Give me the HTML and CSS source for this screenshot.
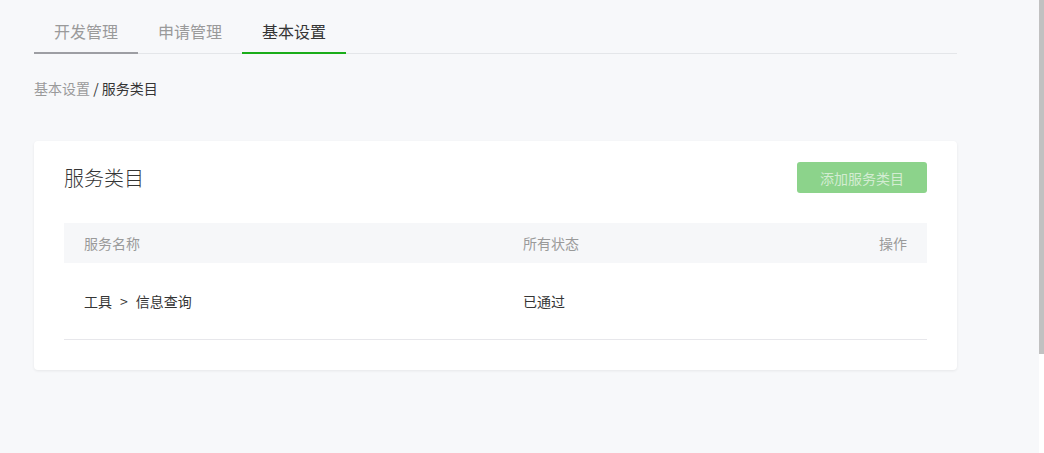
FILE: index.html
```html
<!DOCTYPE html>
<html lang="zh-CN">
<head>
<meta charset="utf-8">
<title>服务类目</title>
<link rel="stylesheet" href="styles.css">
</head>
<body>
<div class="page">
  <nav class="tabs">
    <a class="tab tab-visited">开发管理</a>
    <a class="tab">申请管理</a>
    <a class="tab tab-active">基本设置</a>
  </nav>
  <div class="breadcrumb"><span class="crumb-link">基本设置</span> / <span class="crumb-current">服务类目</span></div>
  <section class="card">
    <div class="card-head">
      <h2 class="card-title">服务类目</h2>
      <button class="btn-add" disabled>添加服务类目</button>
    </div>
    <div class="table">
      <div class="thead">
        <div class="col-name">服务名称</div>
        <div class="col-status">所有状态</div>
        <div class="col-op">操作</div>
      </div>
      <div class="trow">
        <div class="col-name">工具<span class="sep">&gt;</span>信息查询</div>
        <div class="col-status">已通过</div>
        <div class="col-op"></div>
      </div>
    </div>
  </section>
</div>
<div class="scrollbar"><div class="scroll-thumb"></div></div>
</body>
</html>
```
FILE: styles.css
```css
* { box-sizing: border-box; }
html, body { margin: 0; padding: 0; }
body {
  background: #f7f8fa;
  font-family: "Noto Sans CJK SC", "Noto Sans", sans-serif;
  color: #353535;
  font-size: 14px;
  height: 453px;
  overflow: hidden;
}
.page {
  width: 923px;
  margin-left: 34px;
}
.tabs {
  display: flex;
  border-bottom: 1px solid #e4e6e9;
  height: 54px;
}
.tab {
  width: 104px;
  text-align: center;
  font-size: 16px;
  line-height: 22px;
  padding-top: 20px;
  height: 54px;
  border-bottom: 2px solid transparent;
  margin-bottom: -1px;
  color: #9a9a9a;
}
.tab-visited { border-bottom-color: #9d9ea3; }
.tab-active { border-bottom-color: #1aad19; color: #353535; }
.breadcrumb {
  margin-top: 24px;
  line-height: 20px;
  font-size: 14px;
  color: #353535;
}
.crumb-link { color: #9a9a9a; }
.card {
  margin-top: 43px;
  background: #fff;
  border-radius: 4px;
  box-shadow: 0 1px 3px rgba(0,0,0,0.07);
  padding: 21px 30px 30px;
}
.card-head {
  display: flex;
  justify-content: space-between;
  align-items: center;
  height: 31px;
}
.card-title {
  margin: 0;
  font-size: 20px;
  font-weight: 300;
  line-height: 28px;
  color: #353535;
}
.btn-add {
  width: 130px;
  height: 31px;
  border: 0;
  border-radius: 3px;
  background: #8cd38b;
  color: #d3ecd2;
  font-family: inherit;
  font-size: 14px;
  padding: 0;
}
.table { margin-top: 30px; }
.thead, .trow {
  display: grid;
  grid-template-columns: 439px 1fr 120px;
  align-items: center;
  padding: 0 20px;
}
.thead {
  height: 40px;
  background: #f6f7f9;
  color: #9a9a9a;
}
.trow {
  height: 77px;
  border-bottom: 1px solid #e7e7eb;
  color: #353535;
  padding-bottom: 1px;
}
.col-op { text-align: right; }
.sep { margin: 0 8px; color: #353535; }
.scrollbar {
  position: fixed;
  top: 0;
  right: 0;
  width: 5px;
  height: 453px;
  background: #fff;
}
.scroll-thumb {
  height: 354px;
  background: #c1c1c1;
}
```
